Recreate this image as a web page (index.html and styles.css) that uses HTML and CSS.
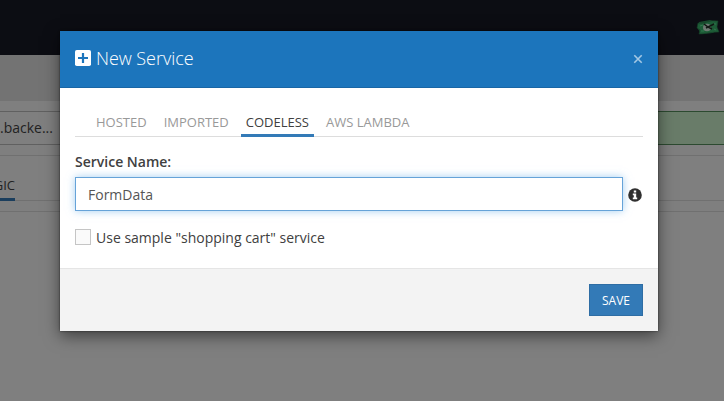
FILE: index.html
```
<!DOCTYPE html>
<html lang="en">
<head>
<meta charset="utf-8">
<title>New Service</title>
<link rel="stylesheet" href="styles.css">
</head>
<body>
<div class="page">
  <header class="topbar">
    <svg class="money" width="24" height="18" viewBox="0 0 24 18">
      <path d="M3 4L14 2 20 4 21 12 17 15 5 16 2 11Z" fill="#174b2d"/>
      <path d="M2 5Q6 6 11 4T22 3L21 9 23 14Q17 14 12 15T3 16L4 12 1 10Z" fill="#1d5c37" stroke="#153d27" stroke-width=".6"/>
      <path d="M4 8l3-1M5 13l3 0M18 6l2 0M18 11l2 1" stroke="#398258" opacity=".7"/>
      <ellipse cx="11" cy="9.500" rx="4" ry="3.800" fill="#6e7a73"/>
      <path d="M8 6l4 3 6-3M12 9l4 2M12 9l-2 1" fill="none" stroke="#111713" stroke-width="1.500"/>
    </svg>
  </header>
  <div class="band"></div>
  <div class="url-row"><div class="url">.backe...</div><div class="status"></div></div>
  <nav class="page-tabs"><span>GIC</span></nav>
  <div class="toolbar"></div>
</div>
<section class="modal" role="dialog">
  <header class="modal-header">
    <svg class="plus" width="16" height="16" viewBox="0 0 16 16"><rect width="16" height="16" rx="1.8" fill="#fff"/><path d="M8 3v10M3 8h10" stroke="#1c75bc" stroke-width="2.2"/></svg>
    <h1>New Service</h1>
    <svg class="close" width="10" height="10" viewBox="0 0 10 10"><path d="M1.3 1.3l7.4 7.4M8.7 1.3L1.3 8.7" stroke="#a4c8e4" stroke-width="1.6"/></svg>
  </header>
  <div class="modal-body">
    <nav class="tabs"><span>HOSTED</span><span>IMPORTED</span><span class="active">CODELESS</span><span>AWS LAMBDA</span></nav>
    <label class="label" for="name">Service Name:</label>
    <div class="field">
      <input id="name" type="text" value="FormData">
      <svg class="info" width="14" height="14" viewBox="0 0 14 14"><circle cx="7" cy="7" r="6.8" fill="#303030"/><path d="M5.8 2.5h2.4v2H5.8zM4.8 5.6h3.4v4h1v1.7H4.8V9.6h1V7.3h-1z" fill="#fff"/></svg>
    </div>
    <div class="check"><span class="box"></span><span class="check-text">Use sample "shopping cart" service</span></div>
  </div>
  <footer class="modal-footer"><button type="button">SAVE</button></footer>
</section>
</body>
</html>
```
FILE: styles.css
```
* { box-sizing: border-box; }
body { margin: 0; height: 401px; overflow: hidden; background: #7f7f7f; font-family: "Open Sans", sans-serif; font-size: 14px; color: #404040; }
.page { height: 401px; }
.topbar { height: 55px; background: #0c0d13; display: flex; justify-content: flex-end; align-items: flex-start; padding: 18px 4px 0 0; }
.band { height: 46px; background: #737373; }
.url-row { height: 34px; margin-top: 10px; display: flex; }
.url { width: 360px; border: solid #606060; border-width: 1px 0; line-height: 32px; color: #222; }
.status { flex: 1; background: #697c69; border: solid #2c4a30; border-width: 1px 0; }
.page-tabs { height: 46px; margin-top: 10px; border: solid #707070; border-width: 1px 0; display: flex; align-items: flex-end; }
.page-tabs span { width: 15px; height: 27px; margin-bottom: -1px; border-bottom: 3px solid #1b3e5d; display: flex; justify-content: flex-end; font-size: 13px; line-height: 22px; color: #222; }
.toolbar { height: 11px; border-bottom: 1px solid #707070; }
.modal { position: absolute; left: 60px; top: 31px; width: 598px; height: 300px; background: #fff; box-shadow: 0 5px 15px rgba(0,0,0,.5), 0 0 2px rgba(0,0,0,.6); display: flex; flex-direction: column; }
.modal-header { height: 57px; padding: 0 15px 1px; background: #1c75bc; border-bottom: 1px solid #1966a5; display: flex; align-items: center; }
.plus { margin-bottom: 1px; }
.modal-header h1 { flex: 1; margin: 0 0 2px 5px; font-size: 18px; font-weight: 300; line-height: 24px; letter-spacing: -.05px; color: #fff; }
.close { margin-top: 1px; }
.modal-body { height: 180px; padding: 15px 15px 0; }
.tabs { height: 34px; padding-left: 16px; border-bottom: 1px solid #ddd; display: flex; gap: 7px; }
.tabs span { height: 34px; padding: 0 5px; font-size: 13px; line-height: 38px; color: #999; white-space: nowrap; }
.tabs .active { color: #404040; border-bottom: 3px solid #337ab7; }
.label { display: block; margin-top: 15px; height: 25px; line-height: 20px; font-weight: 600; }
.field { display: flex; align-items: center; gap: 5px; }
.info { margin-top: 2px; }
.field input { width: 548px; height: 34px; padding: 1px 12px 0; border: 1px solid #66a3d8; border-radius: 0; outline: 0; background: #fff; font: 14px "Open Sans", sans-serif; color: #555; box-shadow: 0 0 8px rgba(102,175,233,.6); }
.check { margin-top: 16px; display: flex; align-items: center; gap: 5px; line-height: 20px; }
.check-text { margin: 1px 0 -1px; }
.box { width: 16px; height: 16px; border: 1px solid #c5c5c5; background: #fafafa; }
.modal-footer { height: 63px; padding: 15px; background: #f3f3f3; border-top: 1px solid #e5e5e5; display: flex; justify-content: flex-end; }
button { width: 54px; height: 32px; padding: 0; border: 1px solid #2e6da4; border-radius: 0; background: #337ab7; color: #fff; font: 12px "Open Sans", sans-serif; }
```
